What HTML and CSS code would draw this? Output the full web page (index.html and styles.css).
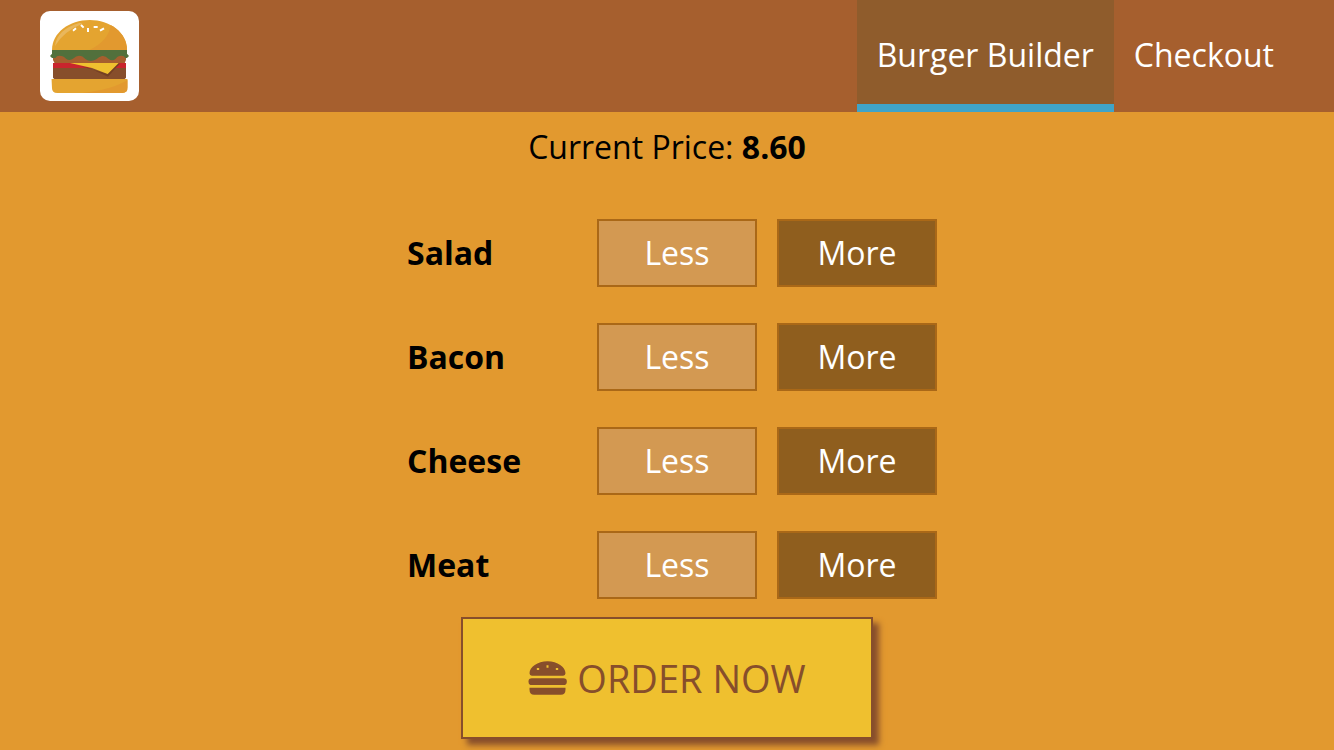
FILE: index.html
```html
<!DOCTYPE html>
<html lang="en">
<head>
<meta charset="utf-8">
<meta name="viewport" content="width=device-width, initial-scale=1">
<title>Burger Builder</title>
<link rel="stylesheet" href="styles.css">
</head>
<body>
<header class="toolbar">
  <div class="logo">
    <svg viewBox="30 33 297 270" role="img" aria-label="Burger">
      <defs>
        <clipPath id="bun-top"><path d="M66 150C66 98 118 60 179 60C240 60 291 98 291 150Z"/></clipPath>
        <clipPath id="bun-bottom"><path d="M64 237H293V262Q293 279 277 279H82Q66 279 66 265Z"/></clipPath>
      </defs>
      <g clip-path="url(#bun-top)">
        <path fill="#e4a430" d="M60 55H300V155H60Z"/>
        <path fill="#e2992f" d="M242 75Q236 124 174 152H300V75Z"/>
        <path fill="#e9b75c" d="M75 138Q80 88 150 68L157 71Q100 94 75 138Z"/>
      </g>
      <path fill="#a65f2e" d="M69 165H288V180L284 190H74L69 180Z"/>
      <path fill="#52703c" d="M66 150H291V161L297 168L291 174H286Q283 167 274 167Q263 167 257 176Q247 185 235 176Q226 166 216 168Q207 170 199 178Q181 188 166 177Q158 167 147 167Q138 167 131 175Q119 185 108 176Q101 167 88 167Q80 167 76 174H66L60 168L66 161Z"/>
      <path fill="#c9252d" d="M69 189H288V204H69Z"/>
      <path fill="#874e2b" d="M69 204H288V233L284 237H73L69 233Z"/>
      <path fill="#743f23" d="M148 198L176 203L234 230L257 204L270 191L264 189L233 221Z"/>
      <path fill="#efc02f" d="M120 189H266L233 222L186 204Z"/>
      <g clip-path="url(#bun-bottom)">
        <path fill="#e4a430" d="M60 235H296V281H60Z"/>
        <path fill="#e2992f" d="M296 238Q250 268 157 279H296Z"/>
      </g>
      <path stroke="#fff" stroke-width="6" d="M129 92L138 85M153 75L161 83M174 84V96M191 81H203M210 92L222 85"/>
    </svg>
  </div>
  <nav class="nav">
    <a class="nav-link active" href="#builder" aria-current="page">Burger Builder</a>
    <a class="nav-link" href="#checkout">Checkout</a>
  </nav>
</header>
<main class="controls">
  <p class="price">Current Price: <strong>8.60</strong></p>
  <div class="row" role="group" aria-labelledby="salad">
    <div class="label" id="salad">Salad</div>
    <button class="less" type="button">Less</button>
    <button class="more" type="button">More</button>
  </div>
  <div class="row" role="group" aria-labelledby="bacon">
    <div class="label" id="bacon">Bacon</div>
    <button class="less" type="button">Less</button>
    <button class="more" type="button">More</button>
  </div>
  <div class="row" role="group" aria-labelledby="cheese">
    <div class="label" id="cheese">Cheese</div>
    <button class="less" type="button">Less</button>
    <button class="more" type="button">More</button>
  </div>
  <div class="row" role="group" aria-labelledby="meat">
    <div class="label" id="meat">Meat</div>
    <button class="less" type="button">Less</button>
    <button class="more" type="button">More</button>
  </div>
  <button class="order" type="button">
    <svg class="order-icon" viewBox="0 0 116 102" aria-hidden="true">
      <path fill="currentColor" fill-rule="evenodd" d="M4 37C4 18 28 1 58 1S112 18 112 37Q112 44 105 44H11Q4 44 4 37ZM26 21H33V27H26ZM55 13H61V20H55ZM83 21H90V27H83Z"/>
      <rect fill="currentColor" x="1" y="52" width="115" height="20" rx="10"/>
      <path fill="currentColor" d="M4 80H112V86Q112 101 98 101H18Q4 101 4 86Z"/>
    </svg>
    <span>ORDER NOW</span>
  </button>
</main>
</body>
</html>
```
FILE: styles.css
```css
* {
  box-sizing: border-box;
}

body {
  margin: 0;
  min-height: 100vh;
  background: #e2992f;
  color: #000;
  font: 32px/44px "Open Sans", "Noto Sans", sans-serif;
}

button {
  font: inherit;
  cursor: pointer;
}

.toolbar {
  display: flex;
  justify-content: space-between;
  align-items: center;
  padding: 0 40px;
  background: #a65f2e;
}

.logo {
  display: flex;
  width: 99px;
  height: 90px;
  border-radius: 10px;
  background: #fff;
  overflow: hidden;
}

.logo svg {
  width: 100%;
  height: 100%;
}

.nav {
  display: flex;
}

.nav-link {
  padding: 33px 20px 27px;
  border-bottom: 8px solid transparent;
  color: #fff;
  text-decoration: none;
}

.nav-link.active {
  background: #8f5c2c;
  border-bottom-color: #40a4c8;
}

.controls {
  display: flex;
  flex-direction: column;
  align-items: center;
  padding: 13px 0 10px;
}

.price {
  margin: 0 0 50px;
}

.row {
  display: flex;
  align-items: center;
  gap: 20px;
  margin-bottom: 36px;
}

.row:last-of-type {
  margin-bottom: 18px;
}

.label {
  width: 180px;
  padding-left: 10px;
  font-weight: 700;
}

.less,
.more {
  width: 160px;
  height: 68px;
  padding: 0;
  border: 2px solid #aa6817;
  color: #fff;
}

.less {
  background: #d39952;
}

.more {
  background: #8f5e1e;
}

.order {
  display: flex;
  align-items: center;
  justify-content: center;
  gap: 10px;
  padding: 36px 65px;
  border: 2px solid #874e2b;
  background: #efc02f;
  color: #874e2b;
  font-size: 38px;
  line-height: 46px;
  box-shadow: 6px 6px 6px #874e2b;
}

.order-icon {
  width: 39px;
  height: 34px;
}
```
